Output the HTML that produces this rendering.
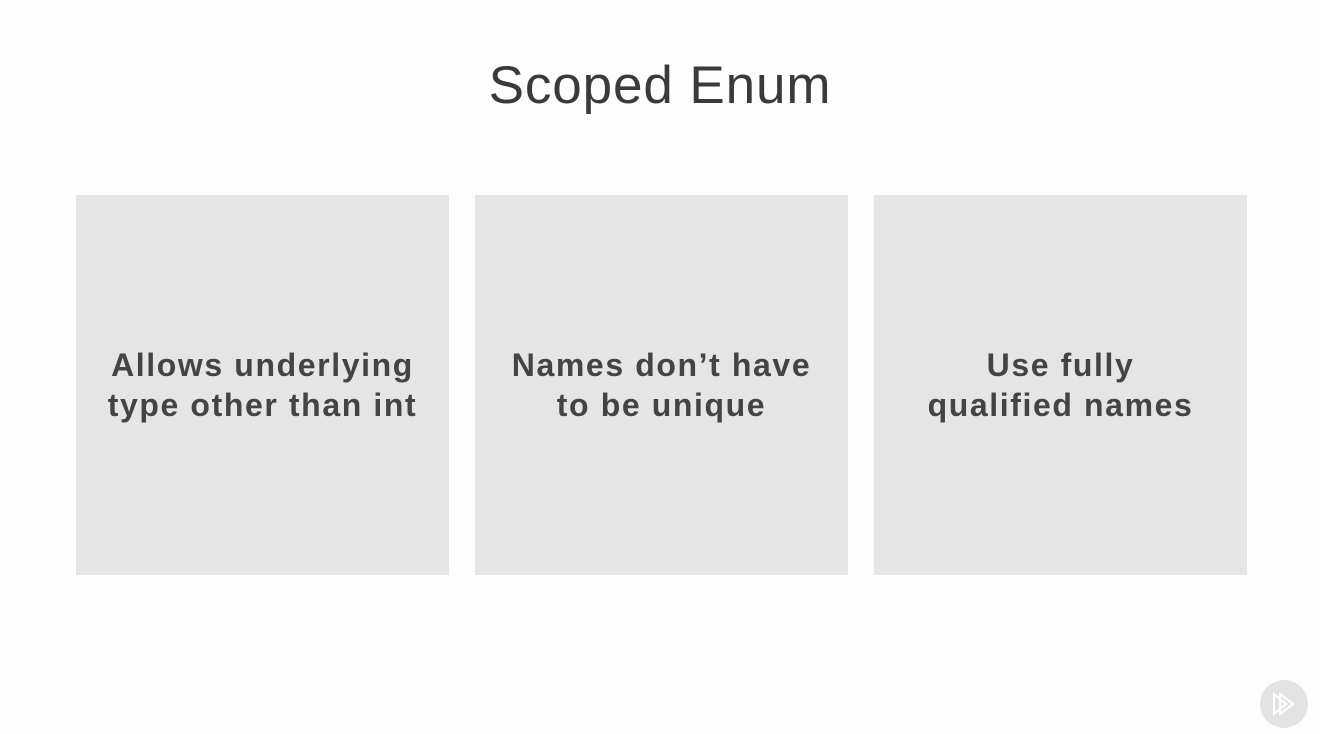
<!DOCTYPE html>
<html><head><style>
body{margin:0;width:1320px;height:734px;background:#fdfdfd;font-family:"Liberation Sans",sans-serif;position:relative;overflow:hidden}
h1{position:absolute;top:55px;left:0;width:1320px;text-align:center;margin:0;font-weight:normal;font-size:53px;color:#3a3a3a;letter-spacing:0.9px;line-height:62px}
.b{position:absolute;top:195px;width:373px;height:380px;background:#e5e5e5;display:flex;align-items:center;justify-content:center;text-align:center;color:#444;font-weight:bold;font-size:32px;line-height:40px;letter-spacing:1.6px}
.c{position:absolute;left:1260px;top:680px;width:48px;height:48px;border-radius:50%;background:#e3e3e3}
</style></head><body>
<h1>Scoped Enum</h1>
<div class="b" style="left:76px">Allows underlying<br>type other than int</div>
<div class="b" style="left:475px">Names don’t have<br>to be unique</div>
<div class="b" style="left:874px">Use fully<br>qualified names</div>
<div class="c"><svg width="48" height="48" viewBox="0 0 48 48"><path d="M14 14 L14 34 L26 24 Z M20 14 L20 34 L33 24 Z" fill="none" stroke="#fff" stroke-width="2"/></svg></div>
</body></html>
